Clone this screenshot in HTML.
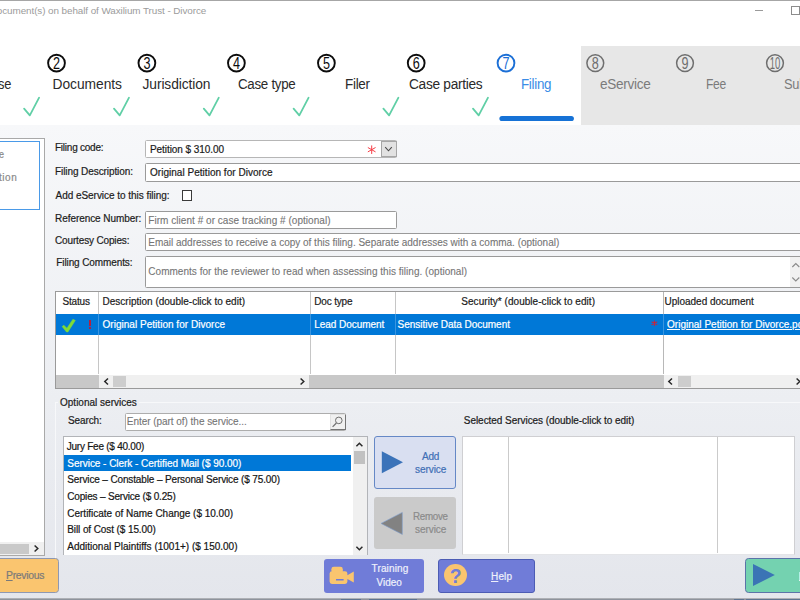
<!DOCTYPE html>
<html>
<head>
<meta charset="utf-8">
<style>
*{box-sizing:border-box;margin:0;padding:0}
html,body{width:800px;height:600px;overflow:hidden;font-family:"Liberation Sans",sans-serif;}
body{background:linear-gradient(#f7f8fa 124px,#eceef2 400px,#e4e6ec 600px);position:relative}
.a{position:absolute;white-space:nowrap}
.t{position:absolute;white-space:nowrap;line-height:14px;-webkit-text-stroke:0.2px}
.inp{position:absolute;background:#fff;border:1px solid #9a9a9a;border-radius:1.5px}
.sc{position:absolute;width:19px;height:19px;border:2px solid #0c0c0c;border-radius:50%;}
</style>
</head>
<body>
<!-- header -->
<div class="a" style="left:0;top:0;width:800px;height:125px;background:#fff"></div>
<div class="a" style="left:0;top:0;width:800px;height:1px;background:#a6a6a6"></div>
<div class="a" style="left:755px;top:10px;width:8px;height:1px;background:#9a9a9a"></div>
<div class="a" style="left:791px;top:6px;width:8.5px;height:8.5px;border:1px solid #8c8c8c"></div>
<div class="a" style="left:581px;top:46px;width:219px;height:79px;background:#e7e7e7"></div>

<!-- step circles + digits + checks (svg) -->
<svg class="a" style="left:0;top:40px" width="800" height="90" viewBox="0 40 800 90">
<g fill="none" stroke-width="1.9">
<circle cx="56.5" cy="63.1" r="8.4" stroke="#0c0c0c"/>
<circle cx="146.9" cy="63.1" r="8.4" stroke="#0c0c0c"/>
<circle cx="236.4" cy="63.1" r="8.4" stroke="#0c0c0c"/>
<circle cx="326.4" cy="63.1" r="8.4" stroke="#0c0c0c"/>
<circle cx="416.2" cy="63.1" r="8.4" stroke="#0c0c0c"/>
<circle cx="506" cy="63.1" r="8.4" stroke="#1b6fd6"/>
<circle cx="595.3" cy="63.1" r="8.4" stroke="#6e6e6e" stroke-width="1.5"/>
<circle cx="685" cy="63.1" r="8.4" stroke="#6e6e6e" stroke-width="1.5"/>
<circle cx="775" cy="63.1" r="8.4" stroke="#6e6e6e" stroke-width="1.5"/>
</g>
<g font-family="Liberation Sans, sans-serif" font-size="15.8" text-anchor="middle">
<text transform="translate(56.5,68.7) scale(0.8,1)" fill="#0c0c0c">2</text>
<text transform="translate(146.9,68.7) scale(0.8,1)" fill="#0c0c0c">3</text>
<text transform="translate(236.4,68.7) scale(0.8,1)" fill="#0c0c0c">4</text>
<text transform="translate(326.4,68.7) scale(0.8,1)" fill="#0c0c0c">5</text>
<text transform="translate(416.2,68.7) scale(0.8,1)" fill="#0c0c0c">6</text>
<text transform="translate(506,68.7) scale(0.8,1)" fill="#1b6fd6">7</text>
<text transform="translate(595.3,68.7) scale(0.8,1)" fill="#6e6e6e">8</text>
<text transform="translate(685,68.7) scale(0.8,1)" fill="#6e6e6e">9</text>
<text transform="translate(775,68.7) scale(0.6,1)" fill="#6e6e6e">10</text>
</g>
<g fill="none" stroke="#60cfa6" stroke-width="1.8" stroke-linecap="round" stroke-linejoin="round">
<path d="M24.1 108.7 L29.8 115.3 L39.1 97.7"/>
<path d="M114.0 108.7 L119.7 115.3 L129.0 97.7"/>
<path d="M203.8 108.7 L209.5 115.3 L218.8 97.7"/>
<path d="M293.6 108.7 L299.3 115.3 L308.6 97.7"/>
<path d="M383.4 108.7 L389.1 115.3 L398.4 97.7"/>
<path d="M473.0 108.7 L478.7 115.3 L488.0 97.7"/>
</g>
<path d="M502 118.5 L571.3 118.5" stroke="#1672d6" stroke-width="5.2" stroke-linecap="round"/>
</svg>

<!-- left panel -->
<div class="a" style="left:-2px;top:138px;width:47px;height:418px;background:#fff;border:1px solid #a9a9a9"></div>
<div class="a" style="left:-2px;top:141px;width:42px;height:69px;background:#fff;border:1px solid #4a9ae8"></div>
<div class="a" style="left:0;top:542px;width:44px;height:13px;background:#f0f0f0"></div>
<div class="a" style="left:0;top:543.5px;width:28.5px;height:10px;background:#c9c9c9"></div>
<svg class="a" style="left:33px;top:544px" width="7" height="9"><path d="M1.6 1.5 L4.8 4.5 L1.6 7.5" fill="none" stroke="#2a2a2a" stroke-width="1.5"/></svg>

<!-- form inputs -->
<div class="inp" style="left:145px;top:140px;width:252px;height:18px;border-color:#b6b6b6"></div>
<div class="a" style="left:381px;top:141px;width:16px;height:16px;background:#e2e2e2;border:1px solid #a6a6a6"></div>
<svg class="a" style="left:383.7px;top:146.3px" width="9" height="7"><path d="M1.2 1.2 L4.5 4.8 L7.8 1.2" fill="none" stroke="#4a4a4a" stroke-width="1.1"/></svg>
<svg class="a" style="left:367px;top:145px" width="10" height="10"><g stroke="#f53f48" stroke-width="1" stroke-linecap="round"><path d="M4.7 0.8 L4.7 8.6 M1.2 2.7 L8.2 6.7 M8.2 2.7 L1.2 6.7"/></g></svg>
<div class="inp" style="left:145px;top:163px;width:670px;height:18.5px"></div>
<div class="a" style="left:181.5px;top:190.3px;width:10.7px;height:10.7px;background:#fff;border:1px solid #3a3a3a"></div>
<div class="inp" style="left:145px;top:210.5px;width:252px;height:18px"></div>
<div class="inp" style="left:145px;top:233px;width:670px;height:18px"></div>
<div class="inp" style="left:145px;top:256px;width:670px;height:32px"></div>
<div class="a" style="left:790px;top:257px;width:10px;height:30px;background:#f1f1f1"></div>
<svg class="a" style="left:790px;top:258px" width="10" height="28"><path d="M2.3 9 L5.8 5.5 L9.3 9 M2.3 19.5 L5.8 23 L9.3 19.5" fill="none" stroke="#8a8a8a" stroke-width="1.1"/></svg>

<!-- documents table -->
<div class="a" style="left:55px;top:291px;width:760px;height:97.5px;background:#fff;border:1px solid #9a9a9a"></div>
<div class="a" style="left:98px;top:292px;width:1px;height:82px;background:#c6c6c6"></div>
<div class="a" style="left:309.5px;top:292px;width:1px;height:82px;background:#c6c6c6"></div>
<div class="a" style="left:394.5px;top:292px;width:1px;height:82px;background:#c6c6c6"></div>
<div class="a" style="left:663px;top:292px;width:1px;height:82px;background:#b8b8b8"></div>
<div class="a" style="left:56px;top:313.7px;width:744px;height:21.5px;background:#0078d7"></div>
<div class="a" style="left:98px;top:313.7px;width:1px;height:21.5px;background:#3a95e0"></div>
<div class="a" style="left:309.5px;top:313.7px;width:1px;height:21.5px;background:#3a95e0"></div>
<div class="a" style="left:394.5px;top:313.7px;width:1px;height:21.5px;background:#3a95e0"></div>
<div class="a" style="left:663px;top:313.7px;width:1px;height:21.5px;background:#3a95e0"></div>
<svg class="a" style="left:60px;top:317px" width="18" height="17"><path d="M2.1 9.6 L3.9 8.2 L6.9 11.2 L12.9 2.3 L15.3 3.4 L7.9 15 L6.5 15 Z" fill="#7fdc35" stroke="#7fdc35" stroke-width="0.5" stroke-linejoin="round"/></svg>
<div class="a" style="left:89px;top:320.3px;width:2.3px;height:6px;background:#b3213f"></div>
<div class="a" style="left:89px;top:327.3px;width:2.3px;height:2.2px;background:#b3213f"></div>
<svg class="a" style="left:651px;top:320px" width="7" height="7"><g stroke="#c8243c" stroke-width="1.1" stroke-linecap="round"><path d="M3.4 0.8 L3.4 5.6 M1 2 L5.8 4.6 M5.8 2 L1 4.6"/></g></svg>
<!-- h scrollbars -->
<div class="a" style="left:56px;top:374.5px;width:744px;height:13px;background:#c8c8c8"></div>
<div class="a" style="left:98.5px;top:374.5px;width:210.5px;height:13px;background:#f0f0f0"></div>
<div class="a" style="left:113px;top:375.5px;width:12.8px;height:11.5px;background:#cdcdcd"></div>
<svg class="a" style="left:103px;top:376.5px" width="7" height="9"><path d="M5 1.5 L1.8 4.5 L5 7.5" fill="none" stroke="#2a2a2a" stroke-width="1.5"/></svg>
<svg class="a" style="left:298.5px;top:376.5px" width="7" height="9"><path d="M1.6 1.5 L4.8 4.5 L1.6 7.5" fill="none" stroke="#2a2a2a" stroke-width="1.5"/></svg>
<div class="a" style="left:663.5px;top:374.5px;width:137px;height:13px;background:#f0f0f0"></div>
<div class="a" style="left:677.5px;top:375.5px;width:13px;height:11.5px;background:#cdcdcd"></div>
<svg class="a" style="left:667.3px;top:376.5px" width="7" height="9"><path d="M5 1.5 L1.8 4.5 L5 7.5" fill="none" stroke="#2a2a2a" stroke-width="1.5"/></svg>
<svg class="a" style="left:795px;top:376.5px" width="7" height="9"><path d="M1.6 1.5 L4.8 4.5 L1.6 7.5" fill="none" stroke="#2a2a2a" stroke-width="1.5"/></svg>

<!-- optional services group -->
<div class="a" style="left:55px;top:402px;width:760px;height:170px;border:1px solid #f7f8fa;border-bottom:none"></div>
<div class="a" style="left:58px;top:398px;width:81px;height:10px;background:#eceef2"></div>
<div class="inp" style="left:124.5px;top:413px;width:221px;height:18px;border-color:#adadad"></div>
<div class="a" style="left:329.5px;top:413.7px;width:16px;height:16.8px;background:#f0f0f0;border:1px solid #e2e2e2;border-right-color:#757575;border-bottom-color:#757575"></div>
<svg class="a" style="left:330px;top:414px" width="15" height="16"><circle cx="8.8" cy="6.4" r="3.3" fill="none" stroke="#6f6f6f" stroke-width="1"/><path d="M6.4 9 L2.6 12.8" stroke="#6f6f6f" stroke-width="1.2"/></svg>

<!-- list -->
<div class="a" style="left:62.5px;top:436px;width:305px;height:119px;background:#fff;border:1px solid #b2b4b8;border-bottom:none"></div>
<div class="a" style="left:64.3px;top:454.5px;width:287px;height:16.3px;background:#0078d7"></div>
<div class="a" style="left:353px;top:437px;width:13.5px;height:118px;background:#f0f0f0"></div>
<div class="a" style="left:353.8px;top:450.7px;width:10.8px;height:13px;background:#c1c1c1"></div>
<svg class="a" style="left:354.5px;top:440.5px" width="9" height="7"><path d="M1.4 5.2 L4.4 2.2 L7.4 5.2" fill="none" stroke="#2a2a2a" stroke-width="1.5"/></svg>
<svg class="a" style="left:354.5px;top:544.5px" width="9" height="7"><path d="M1.4 1.8 L4.4 4.8 L7.4 1.8" fill="none" stroke="#2a2a2a" stroke-width="1.5"/></svg>

<!-- add/remove buttons -->
<div class="a" style="left:374px;top:436px;width:81.7px;height:52.5px;background:#d9dff1;border:1px solid #6588c6;border-radius:3px"></div>
<svg class="a" style="left:381px;top:450px" width="24" height="25"><path d="M0.8 1.2 L22 12.2 L0.8 23.2 Z" fill="#3b73b9"/></svg>
<div class="a" style="left:374px;top:497.3px;width:81.7px;height:51.5px;background:#cacaca;border-radius:3px"></div>
<svg class="a" style="left:380.3px;top:510.5px" width="24" height="25"><path d="M22.3 1.4 L1 12.4 L22.3 23.4 Z" fill="#828282" stroke="#7f9fd0" stroke-width="0.6"/></svg>

<!-- selected services -->
<div class="a" style="left:462px;top:436px;width:333px;height:119px;background:#fff;border:1px solid #cfcfd2;border-bottom-color:#e4e5e8"></div>
<div class="a" style="left:508px;top:437px;width:1px;height:116px;background:#cbcbcb"></div>
<div class="a" style="left:716.5px;top:437px;width:1px;height:116px;background:#cbcbcb"></div>

<!-- bottom buttons -->
<div class="a" style="left:-4px;top:558px;width:62.5px;height:34.5px;background:#fac56f;border:1px solid #8e98b2;border-radius:3.5px"></div>
<div class="a" style="left:323.5px;top:558.5px;width:100.5px;height:34px;background:#707cd8;border-radius:3px"></div>
<svg class="a" style="left:329px;top:566px" width="27" height="19"><path d="M3 5.2 h13 a2.4 2.4 0 0 1 2.4 2.4 v1.6 l6.4 -3.6 v11 l-6.4 -3.6 v2.6 a2.4 2.4 0 0 1 -2.4 2.4 h-13 a2.4 2.4 0 0 1 -2.4 -2.4 v-8 a2.4 2.4 0 0 1 2.4 -2.4 z" fill="#fac56f"/><rect x="2.4" y="0.8" width="11.4" height="6.5" rx="2.4" fill="#fac56f"/><rect x="7" y="13" width="7.6" height="1.5" fill="#707cd8"/></svg>
<div class="a" style="left:438px;top:558.5px;width:96.5px;height:34px;background:#707cd8;border:1px solid #4c5cb4;border-radius:3px"></div>
<div class="a" style="left:444px;top:563.5px;width:23.4px;height:22.6px;border-radius:50%;background:#fac56f"></div>
<div class="a" style="left:444px;top:563.5px;width:23.4px;height:22.6px;text-align:center;font-size:21px;font-weight:bold;line-height:23.5px;color:#707cd8;transform:scaleX(0.92)">?</div>
<div class="a" style="left:745px;top:558px;width:70px;height:35px;background:#74d2b0;border:1px solid #5b74a8;border-radius:3.5px"></div>
<svg class="a" style="left:752px;top:563px" width="24" height="24"><path d="M1 1 L22.8 12 L1 23 Z" fill="#3b74b5"/></svg>
<div class="a" style="left:799px;top:572px;width:1px;height:8px;background:#b5efe6"></div><div class="a" style="left:799px;top:580px;width:1px;height:1px;background:#e8f8f4"></div>

<div class="a" style="left:0;top:598px;width:800px;height:1px;background:#aeb0b5"></div>
<div class="a" style="left:0;top:599px;width:800px;height:1px;background:#8e939c"></div><div class="a" style="left:341px;top:599px;width:20px;height:1px;background:#5d7390"></div><div class="a" style="left:369px;top:599px;width:48px;height:1px;background:#5d7390"></div><div class="a" style="left:734px;top:599px;width:10px;height:1px;background:#5d7390"></div><div class="a" style="left:746px;top:599px;width:54px;height:1px;background:#5d7390"></div>
<div class="t" style="left:-3.20px;top:3.67px;font-size:9.9px;letter-spacing:-0.077px;color:#9b9b9b;-webkit-text-stroke:0;">ocument(s) on behalf of Waxilium Trust - Divorce</div>
<div class="t" style="left:-1.98px;top:77.92px;font-size:13.8px;letter-spacing:-0.300px;color:#2a2a2a;-webkit-text-stroke:0;transform:scaleX(0.9300);transform-origin:0 0;">se</div>
<div class="t" style="left:52.50px;top:77.92px;font-size:13.8px;letter-spacing:-0.035px;color:#2a2a2a;-webkit-text-stroke:0;">Documents</div>
<div class="t" style="left:142.50px;top:77.92px;font-size:13.8px;letter-spacing:-0.092px;color:#2a2a2a;-webkit-text-stroke:0;">Jurisdiction</div>
<div class="t" style="left:238.00px;top:77.92px;font-size:13.8px;letter-spacing:-0.300px;color:#2a2a2a;-webkit-text-stroke:0;transform:scaleX(0.9678);transform-origin:0 0;">Case type</div>
<div class="t" style="left:344.50px;top:77.92px;font-size:13.8px;letter-spacing:-0.300px;color:#2a2a2a;-webkit-text-stroke:0;transform:scaleX(0.9755);transform-origin:0 0;">Filer</div>
<div class="t" style="left:409.30px;top:77.92px;font-size:13.8px;letter-spacing:-0.300px;color:#2a2a2a;-webkit-text-stroke:0;transform:scaleX(0.9939);transform-origin:0 0;">Case parties</div>
<div class="t" style="left:521.30px;top:77.92px;font-size:13.8px;letter-spacing:-0.300px;color:#3a8ce6;-webkit-text-stroke:0;transform:scaleX(0.9687);transform-origin:0 0;">Filing</div>
<div class="t" style="left:600.00px;top:77.92px;font-size:13.8px;letter-spacing:-0.300px;color:#7b7b7b;-webkit-text-stroke:0;transform:scaleX(0.9847);transform-origin:0 0;">eService</div>
<div class="t" style="left:705.50px;top:77.92px;font-size:13.8px;letter-spacing:-0.300px;color:#7b7b7b;-webkit-text-stroke:0;transform:scaleX(0.8757);transform-origin:0 0;">Fee</div>
<div class="t" style="left:783.80px;top:77.92px;font-size:13.8px;letter-spacing:-0.300px;color:#7b7b7b;-webkit-text-stroke:0;transform:scaleX(0.9300);transform-origin:0 0;">Sub</div>
<div class="t" style="left:-1.50px;top:147.63px;font-size:10px;letter-spacing:-0.300px;color:#8a8a8a;transform:scaleX(0.8989);transform-origin:0 0;">e</div>
<div class="t" style="left:-1.00px;top:170.63px;font-size:10px;letter-spacing:0.525px;color:#8a8a8a;">tion</div>
<div class="t" style="left:55.00px;top:140.63px;font-size:10px;letter-spacing:-0.240px;color:#1c1c1c;">Filing code:</div>
<div class="t" style="left:55.00px;top:164.63px;font-size:10px;letter-spacing:-0.082px;color:#1c1c1c;">Filing Description:</div>
<div class="t" style="left:55.50px;top:188.63px;font-size:10px;letter-spacing:-0.039px;color:#1c1c1c;">Add eService to this filing:</div>
<div class="t" style="left:55.00px;top:211.63px;font-size:10px;letter-spacing:-0.060px;color:#1c1c1c;">Reference Number:</div>
<div class="t" style="left:55.00px;top:233.63px;font-size:10px;letter-spacing:-0.147px;color:#1c1c1c;">Courtesy Copies:</div>
<div class="t" style="left:56.30px;top:255.63px;font-size:10px;letter-spacing:-0.107px;color:#1c1c1c;">Filing Comments:</div>
<div class="t" style="left:150.00px;top:142.63px;font-size:10px;letter-spacing:-0.066px;color:#1c1c1c;">Petition $ 310.00</div>
<div class="t" style="left:150.00px;top:165.63px;font-size:10px;letter-spacing:0.028px;color:#1c1c1c;">Original Petition for Divorce</div>
<div class="t" style="left:148.30px;top:213.63px;font-size:10px;letter-spacing:0.037px;color:#757575;-webkit-text-stroke:0.1px;">Firm client # or case tracking # (optional)</div>
<div class="t" style="left:148.30px;top:235.63px;font-size:10px;letter-spacing:-0.010px;color:#757575;-webkit-text-stroke:0.1px;">Email addresses to receive a copy of this filing. Separate addresses with a comma. (optional)</div>
<div class="t" style="left:148.30px;top:264.64px;font-size:10px;letter-spacing:0.027px;color:#757575;-webkit-text-stroke:0.1px;">Comments for the reviewer to read when assessing this filing. (optional)</div>
<div class="t" style="left:62.50px;top:294.64px;font-size:10px;letter-spacing:-0.172px;color:#1c1c1c;">Status</div>
<div class="t" style="left:102.50px;top:294.64px;font-size:10px;letter-spacing:0.007px;color:#1c1c1c;">Description (double-click to edit)</div>
<div class="t" style="left:314.30px;top:294.64px;font-size:10px;letter-spacing:-0.181px;color:#1c1c1c;">Doc type</div>
<div class="t" style="left:461.30px;top:294.64px;font-size:10px;letter-spacing:0.046px;color:#1c1c1c;">Security* (double-click to edit)</div>
<div class="t" style="left:664.50px;top:294.64px;font-size:10px;letter-spacing:-0.013px;color:#1c1c1c;">Uploaded document</div>
<div class="t" style="left:102.50px;top:317.64px;font-size:10px;letter-spacing:0.028px;color:#fff;">Original Petition for Divorce</div>
<div class="t" style="left:314.30px;top:317.64px;font-size:10px;letter-spacing:-0.051px;color:#fff;">Lead Document</div>
<div class="t" style="left:397.50px;top:317.64px;font-size:10px;letter-spacing:-0.016px;color:#fff;">Sensitive Data Document</div>
<div class="t" style="left:667.00px;top:317.64px;font-size:10px;letter-spacing:0.019px;color:#fff;text-decoration:underline;">Original Petition for Divorce.pdf</div>
<div class="t" style="left:60.00px;top:395.64px;font-size:10px;letter-spacing:0.006px;color:#1c1c1c;">Optional services</div>
<div class="t" style="left:68.00px;top:413.64px;font-size:10px;letter-spacing:-0.111px;color:#1c1c1c;">Search:</div>
<div class="t" style="left:126.80px;top:414.64px;font-size:10px;letter-spacing:-0.040px;color:#757575;-webkit-text-stroke:0.1px;">Enter (part of) the service...</div>
<div class="t" style="left:463.80px;top:413.64px;font-size:10px;letter-spacing:-0.046px;color:#1c1c1c;">Selected Services (double-click to edit)</div>
<div class="t" style="left:66.80px;top:439.64px;font-size:10px;letter-spacing:-0.248px;color:#151515;">Jury Fee ($ 40.00)</div>
<div class="t" style="left:67.30px;top:456.64px;font-size:10px;letter-spacing:-0.039px;color:#fff;">Service - Clerk - Certified Mail ($ 90.00)</div>
<div class="t" style="left:67.30px;top:472.64px;font-size:10px;letter-spacing:-0.134px;color:#151515;">Service – Constable – Personal Service ($ 75.00)</div>
<div class="t" style="left:67.30px;top:489.64px;font-size:10px;letter-spacing:-0.181px;color:#151515;">Copies – Service ($ 0.25)</div>
<div class="t" style="left:67.30px;top:506.64px;font-size:10px;letter-spacing:-0.014px;color:#151515;">Certificate of Name Change ($ 10.00)</div>
<div class="t" style="left:67.30px;top:522.63px;font-size:10px;letter-spacing:-0.100px;color:#151515;">Bill of Cost ($ 15.00)</div>
<div class="t" style="left:67.30px;top:539.63px;font-size:10px;letter-spacing:-0.000px;color:#151515;">Additional Plaintiffs (1001+) ($ 150.00)</div>
<div class="t" style="left:422.00px;top:449.64px;font-size:10px;letter-spacing:-0.248px;color:#3f6fb6;">Add</div>
<div class="t" style="left:415.00px;top:462.64px;font-size:10px;letter-spacing:-0.065px;color:#3f6fb6;">service</div>
<div class="t" style="left:412.50px;top:509.64px;font-size:10px;letter-spacing:-0.300px;color:#8b8b8b;transform:scaleX(0.9790);transform-origin:0 0;">Remove</div>
<div class="t" style="left:415.00px;top:522.63px;font-size:10px;letter-spacing:-0.065px;color:#8b8b8b;">service</div>
<div class="t" style="left:6.00px;top:568.46px;font-size:10.5px;letter-spacing:-0.300px;color:#7a7a7a;transform:scaleX(0.9907);transform-origin:0 0;"><u>P</u>revious</div>
<div class="t" style="left:371.50px;top:561.63px;font-size:10px;letter-spacing:0.162px;color:#eef0fb;">Training</div>
<div class="t" style="left:376.60px;top:575.63px;font-size:10px;letter-spacing:-0.052px;color:#eef0fb;">Video</div>
<div class="t" style="left:491.00px;top:569.63px;font-size:10px;letter-spacing:0.141px;color:#eef0fb;"><u>H</u>elp</div>
</body>
</html>
